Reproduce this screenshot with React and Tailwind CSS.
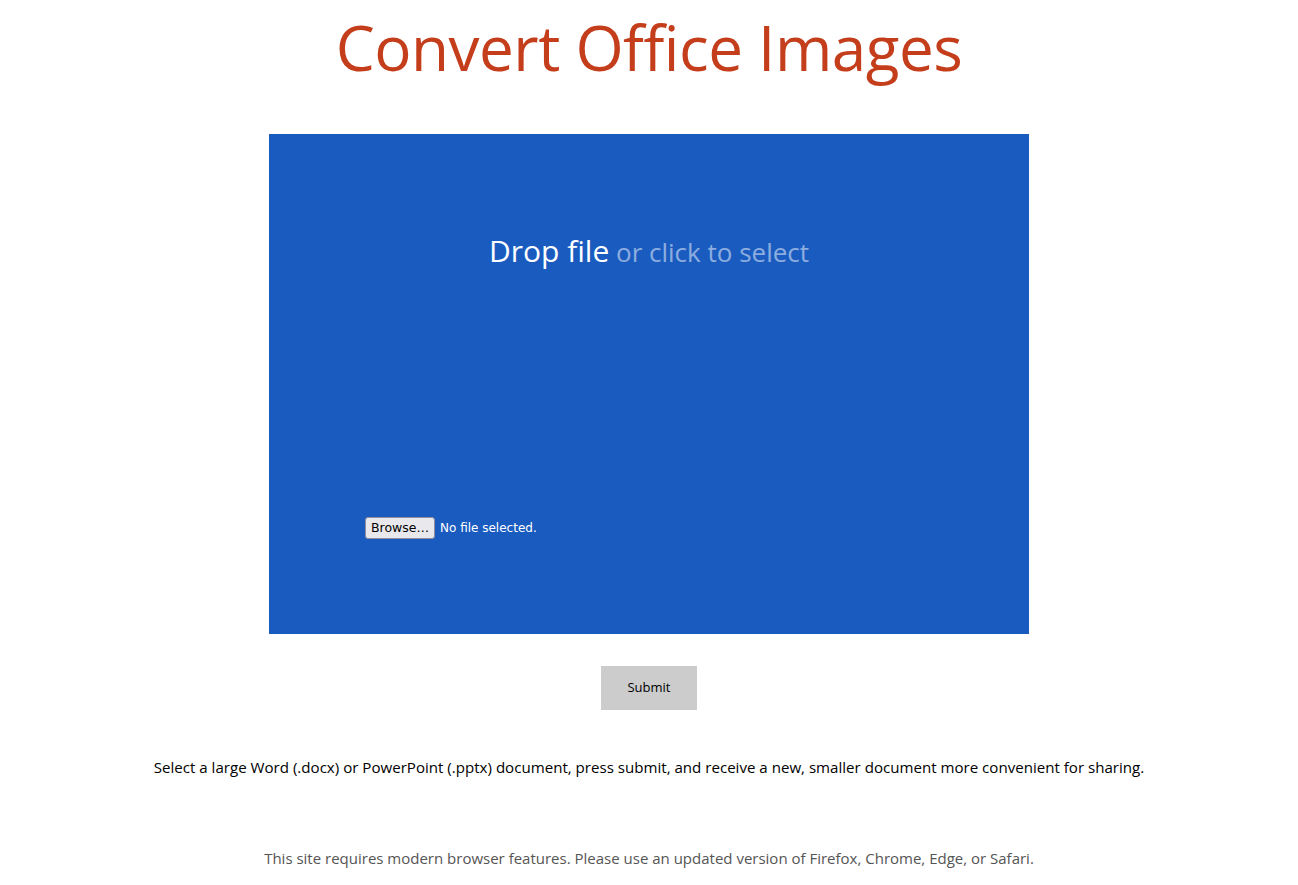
import React from 'react';

const App = () => {
    return (
        <div className="min-h-screen bg-white font-['Open_Sans',sans-serif] flex flex-col items-center">
            <h1 className="mt-[7px] text-[62px] leading-[80px] text-[#c43e1c] tracking-[-0.5px]">
                Convert Office Images
            </h1>

            {/* Drop zone */}
            <div className="mt-[47px] w-[760px] h-[500px] bg-[#1a5bbf] flex flex-col cursor-pointer">
                <div className="mt-[94px] text-center">
                    <span className="text-[30px] text-white">Drop file</span>
                    <span className="text-[26px] text-white/50"> or click to select</span>
                </div>
                <div className="mt-[244px] ml-[96px] flex items-center gap-[5px] font-['DejaVu_Sans',sans-serif] text-[12px]">
                    <button
                        type="button"
                        className="h-[22px] px-[5px] bg-[#e9e9ed] border border-[#8f8f9d] rounded-[3px] text-black text-[12.5px]"
                    >
                        Browse…
                    </button>
                    <span className="text-white">No file selected.</span>
                </div>
            </div>

            <button
                type="button"
                className="mt-[32px] w-[96px] h-[44px] bg-[#cccccc] text-[13px] text-black"
            >
                Submit
            </button>

            <p className="mt-[46px] text-[15.1px] text-black">
                Select a large Word (.docx) or PowerPoint (.pptx) document, press submit, and receive a new, smaller document more convenient for sharing.
            </p>

            <p className="mt-[68px] text-[15px] text-[#555555]">
                This site requires modern browser features. Please use an updated version of Firefox, Chrome, Edge, or Safari.
            </p>
        </div>
    );
};

export default App;
